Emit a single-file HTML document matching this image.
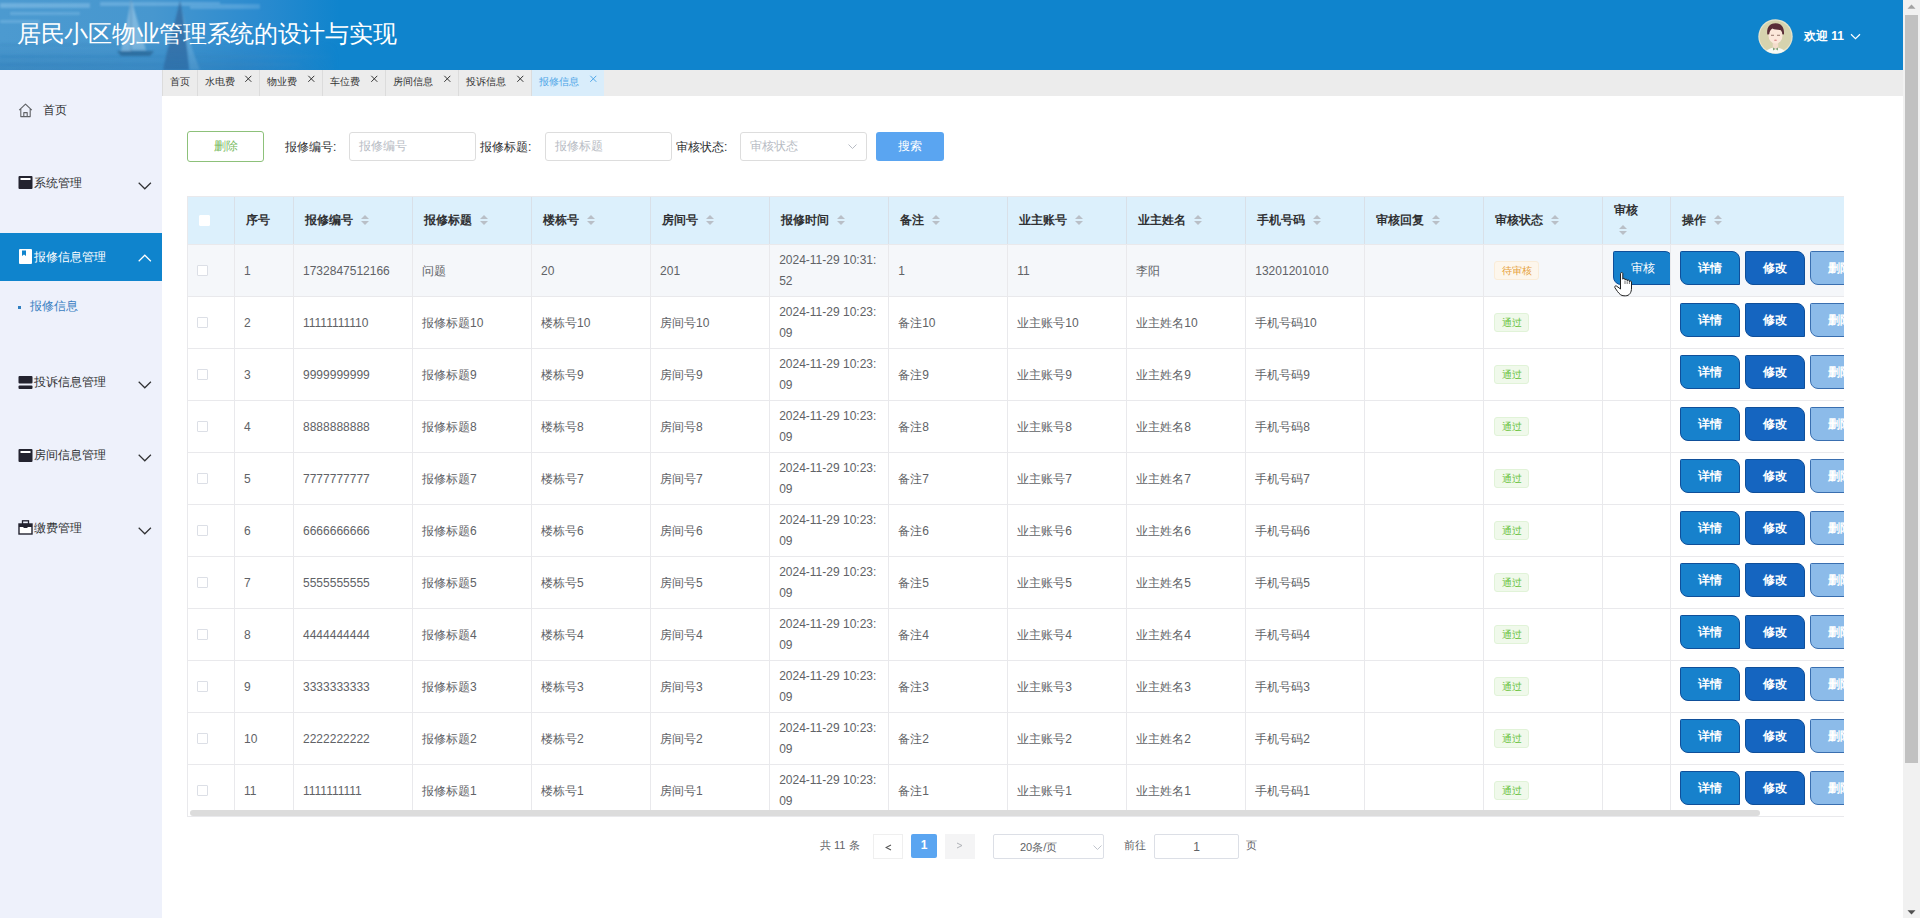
<!DOCTYPE html><html><head><meta charset="utf-8"><title>page</title><style>
*{margin:0;padding:0;box-sizing:border-box}
html,body{width:1920px;height:918px;overflow:hidden;background:#fff;font-family:"Liberation Sans",sans-serif;color:#606266}
.abs{position:absolute}
#hdr{position:absolute;left:0;top:0;width:1903px;height:70px;background:#0f84cd;overflow:hidden}
#hdrimg{position:absolute;left:0;top:0;width:340px;height:70px;background:linear-gradient(90deg,#4c9ad0 0%,#4797cf 45%,#2c8bcf 75%,rgba(15,132,205,0) 100%)}
#title{position:absolute;left:17px;top:17px;font-size:24px;line-height:34px;color:#fff;white-space:nowrap;letter-spacing:-0.3px}
#side{position:absolute;left:0;top:70px;width:162px;height:848px;background:#eef1fb}
#tabs{position:absolute;left:162px;top:70px;width:1741px;height:26px;background:#ececec}
.tab{position:absolute;top:0;height:26px;border-left:1px solid #dcdcdc;font-size:10px;line-height:24px;color:#333;white-space:nowrap}
.tab .x{position:absolute;top:-2px;font-size:10px;color:#333}
.tab.on{background:#d9edfb;color:#4ea6e8}
.tab.on .x{color:#4ea6e8}
.menu{position:absolute;left:0;width:162px;height:48px;font-size:12px;line-height:48px;color:#303133;white-space:nowrap}
.menu .t{position:absolute;left:34px;top:0}
.menu.on{background:#0f84cd;color:#fff}
.chev{position:absolute;left:138px;top:23px}
.menu.on .chev{top:21px}
#content{position:absolute;left:162px;top:96px;width:1741px;height:822px;background:#fff}
.lbl{position:absolute;top:137px;font-size:12px;line-height:20px;color:#303133;white-space:nowrap}
.inp{position:absolute;top:132px;height:29px;border:1px solid #dddddd;border-radius:3px;background:#fff;font-size:12px;line-height:27px;color:#b8bcc4;padding-left:9px;white-space:nowrap}
#tbl{position:absolute;left:187px;top:196px;width:1657px;height:621px;overflow:hidden;border-top:1px solid #e9e9ec;border-left:1px solid #e9e9ec;border-bottom:1px solid #e9e9ec}
table{border-collapse:collapse;table-layout:fixed;width:1719px}
td,th{border-right:1px solid #e9e9ec;border-bottom:1px solid #e9e9ec;padding:0 0 0 10.5px;text-align:left;vertical-align:middle;font-size:12px;color:#606266;white-space:nowrap;overflow:hidden}
th{height:47px;background:#dcf0fc;color:#303133;font-weight:bold;border-right:1px solid #d9e0e8;padding-left:11.5px}
td{height:52px;line-height:21px;padding-top:2px;padding-left:9.5px}
tr.hov td{background:#f5f7fa}
.sort{display:inline-block;width:8px;height:11px;position:relative;vertical-align:-2px;margin-left:7.5px}
.sort:before{content:"";position:absolute;left:0;top:0;border-left:4px solid transparent;border-right:4px solid transparent;border-bottom:4px solid #b9bfc7}
.sort:after{content:"";position:absolute;left:0;top:6px;border-left:4px solid transparent;border-right:4px solid transparent;border-top:4px solid #b9bfc7}
.cb{display:inline-block;width:11px;height:11px;border:1px solid #dcdfe6;background:#fff;border-radius:1px}
.tag{position:relative;top:-1px;left:1px;display:inline-block;height:19px;line-height:17px;padding:0 6.5px;font-size:10px;border:1px solid;border-radius:3px}
.tag.w{background:#fdf6ec;border-color:#faecd8;color:#e6a23c}
.tag.p{background:#f0f9eb;border-color:#e1f3d8;color:#67c23a}
.btn{display:inline-block;height:34px;width:60px;line-height:32px;text-align:center;color:#fff;font-weight:bold;font-size:12px;border:1px solid #0f4f9a;border-radius:1.5px 8px 0 8px;vertical-align:middle;margin-top:-7px}
.b1{background:#1781cc}
.b2{background:#1565c0;margin-left:5px}
.b3{background:#8cbbe9;border-color:#3a6fb0;margin-left:5px}
#hscroll{position:absolute;left:2px;top:613px;width:1570px;height:6px;border-radius:3px;background:#dcdcdc}
#vs{position:absolute;left:1903px;top:0;width:17px;height:918px;background:#f1f1f1}
#vthumb{position:absolute;left:2px;top:15px;width:13px;height:748px;background:#c1c1c1}
.pg{position:absolute;top:834px;height:25px;font-size:12px;line-height:25px;text-align:center}
</style></head><body>
<div id="hdr"><div id="hdrimg"></div>
<svg class="abs" style="left:0;top:0" width="340" height="70" viewBox="0 0 340 70"><defs><linearGradient id="fade" x1="0" x2="1" y1="0" y2="0"><stop offset="0" stop-color="#fff" stop-opacity="1"/><stop offset="0.7" stop-color="#fff" stop-opacity="0.8"/><stop offset="1" stop-color="#fff" stop-opacity="0"/></linearGradient><linearGradient id="vdark" x1="0" x2="0" y1="0" y2="1"><stop offset="0" stop-color="#1d6aa8" stop-opacity="0"/><stop offset="1" stop-color="#1d6aa8" stop-opacity="0.35"/></linearGradient><mask id="m"><rect width="340" height="70" fill="url(#fade)"/></mask><filter id="bl"><feGaussianBlur stdDeviation="1.2"/></filter><filter id="bl2"><feGaussianBlur stdDeviation="1"/></filter></defs><g mask="url(#m)"><g filter="url(#bl)" opacity="0.55"><rect x="0" y="3" width="90" height="5" fill="#8cc3ea"/><rect x="10" y="12" width="70" height="3" fill="#7ab8e4"/><rect x="100" y="2" width="120" height="4" fill="#86bfe8"/><rect x="190" y="4" width="70" height="5" fill="#80bce6"/><rect x="0" y="20" width="40" height="3" fill="#7ab8e4"/><rect x="0" y="44" width="120" height="2" fill="#3f8fc6"/><rect x="0" y="55" width="330" height="3" fill="#3a8cc6"/><rect x="0" y="63" width="300" height="3" fill="#3d8dc6"/></g><g filter="url(#bl2)"><path d="M131 0 L131 51 L121 51 Z" fill="#a9d2ee" opacity="0.55"/><path d="M132 2 L132 50 L146 50 Z" fill="#c0e0f4" opacity="0.5"/><rect x="130.5" y="0" width="1.2" height="52" fill="#6d9cc0"/><path d="M117 51 L154 51 L150 56 L121 56 Z" fill="#2f6a99"/><path d="M180 0 C176 20 168 45 163 70 L189 70 C187 45 184 20 180 0 Z" fill="#33679e" opacity="0.85"/><path d="M182 8 C186 30 192 50 200 70 L190 70 C187 45 184 25 182 8 Z" fill="#8fc3e6" opacity="0.45"/></g><rect x="0" y="40" width="340" height="30" fill="url(#vdark)"/></g></svg>
<div id="title">居民小区物业管理系统的设计与实现</div>
<svg class="abs" style="left:1758px;top:19px" width="35" height="35" viewBox="0 0 35 35"><defs><clipPath id="cc"><circle cx="17.5" cy="17.5" r="17"/></clipPath></defs><circle cx="17.5" cy="17.5" r="17.2" fill="#e6e4cc"/><g clip-path="url(#cc)"><circle cx="17.5" cy="17.5" r="16" fill="#d6d3ae"/><ellipse cx="17.5" cy="36" rx="11" ry="7.5" fill="#f7f9f4"/><rect x="14.8" y="21" width="5.4" height="9" fill="#f3dccb"/><path d="M15 28.5 L17.5 30 L15 31.5 Z M20 28.5 L17.5 30 L20 31.5 Z" fill="#7fa37a"/><ellipse cx="17.5" cy="16.5" rx="7" ry="8" fill="#fbe7da"/><path d="M9.3 15.6 C8.3 8 12 4.2 17.5 4.2 C23 4.2 26.7 8 25.9 15.6 L24.3 15.2 C24.2 12.8 23.4 11.6 22.2 11 C19.5 11 16.5 10.6 14.3 9.6 C12.6 11 11.6 12.5 11.2 15.2 Z" fill="#5a2d37"/><rect x="13" y="15.8" width="3" height="0.9" fill="#8a6a60"/><rect x="19" y="15.8" width="3" height="0.9" fill="#8a6a60"/><ellipse cx="17.5" cy="21.2" rx="1.5" ry="0.8" fill="#d88f8f"/></g></svg>
<div class="abs" style="left:1804px;top:28px;font-size:12px;line-height:16px;font-weight:bold;color:#fff;white-space:nowrap">欢迎 11</div>
<svg class="abs" style="left:1850px;top:33px" width="11" height="7" viewBox="0 0 11 7"><path d="M1 1.2 L5.5 5.6 L10 1.2" stroke="#fff" stroke-width="1.2" fill="none"/></svg>
</div>
<div id="side">
<svg class="abs" style="left:18px;top:33px" width="15" height="15" viewBox="0 0 15 15"><path d="M1.2 7.2 L7.5 1.2 L13.8 7.2 M2.8 5.8 V13.6 H12.2 V5.8 M5.8 13.6 V9.6 H9.2 V13.6" stroke="#606266" stroke-width="1.1" fill="none" stroke-linejoin="round"/></svg>
<div class="abs" style="left:43px;top:32px;font-size:12px;line-height:17px;color:#303133">首页</div>
<div class="menu" style="top:89px">
<svg class="abs" style="left:18px;top:17px" width="15" height="13" viewBox="0 0 15 13"><rect x="0.5" y="0" width="14" height="13" rx="1" fill="#23232f"/><rect x="2.5" y="2" width="10" height="2" fill="#fff"/></svg>
<span class="t" style="color:#303133">系统管理</span>
<svg class="chev" width="14" height="8" viewBox="0 0 14 8"><path d="M0.7 0.8 L6.8 6.8 L12.9 0.8" stroke="#303133" stroke-width="1.2" fill="none"/></svg>
</div>
<div class="menu on" style="top:163px">
<svg class="abs" style="left:19px;top:16px" width="14" height="15" viewBox="0 0 14 15"><rect x="0" y="0" width="13" height="15" rx="1" fill="#fff"/><path d="M3 1.5 V7 L5 5.6 L7 7 V1.5 Z" fill="#0f84cd"/></svg>
<span class="t" style="color:#fff">报修信息管理</span>
<svg class="chev" width="14" height="8" viewBox="0 0 14 8"><path d="M0.7 7.2 L6.8 1.2 L12.9 7.2" stroke="#fff" stroke-width="1.2" fill="none"/></svg>
</div>
<div class="menu" style="top:288px">
<svg class="abs" style="left:18px;top:18px" width="15" height="13" viewBox="0 0 15 13"><rect x="0.5" y="0" width="14" height="7.5" rx="1" fill="#23232f"/><rect x="0.5" y="9.5" width="14" height="3.5" rx="1" fill="#23232f"/></svg>
<span class="t" style="color:#303133">投诉信息管理</span>
<svg class="chev" width="14" height="8" viewBox="0 0 14 8"><path d="M0.7 0.8 L6.8 6.8 L12.9 0.8" stroke="#303133" stroke-width="1.2" fill="none"/></svg>
</div>
<div class="menu" style="top:361px">
<svg class="abs" style="left:18px;top:18px" width="15" height="13" viewBox="0 0 15 13"><rect x="0.5" y="0" width="14" height="13" rx="1" fill="#23232f"/><rect x="2.5" y="2" width="10" height="2" fill="#fff"/></svg>
<span class="t" style="color:#303133">房间信息管理</span>
<svg class="chev" width="14" height="8" viewBox="0 0 14 8"><path d="M0.7 0.8 L6.8 6.8 L12.9 0.8" stroke="#303133" stroke-width="1.2" fill="none"/></svg>
</div>
<div class="menu" style="top:434px">
<svg class="abs" style="left:18px;top:16px" width="15" height="15" viewBox="0 0 15 15"><rect x="4.5" y="0.8" width="6" height="3.5" fill="none" stroke="#23232f" stroke-width="1.3"/><rect x="1" y="4" width="13" height="10" fill="#fff" stroke="#23232f" stroke-width="1.4"/><rect x="1" y="4" width="13" height="3" fill="#23232f"/><rect x="5.5" y="6" width="4" height="2" fill="#23232f"/></svg>
<span class="t" style="color:#303133">缴费管理</span>
<svg class="chev" width="14" height="8" viewBox="0 0 14 8"><path d="M0.7 0.8 L6.8 6.8 L12.9 0.8" stroke="#303133" stroke-width="1.2" fill="none"/></svg>
</div>
<div class="abs" style="left:18px;top:236px;width:3px;height:3px;background:#2f7fc1"></div>
<div class="abs" style="left:30px;top:228px;font-size:12px;line-height:17px;color:#3a80c2">报修信息</div>
</div>
<div id="tabs">
<div class="tab" style="left:0px;width:35px"><span style="position:absolute;left:7px">首页</span></div>
<div class="tab" style="left:35px;width:62px"><span style="position:absolute;left:7px">水电费</span><svg class="x" style="left:46px;top:5px" width="8" height="8" viewBox="0 0 8 8"><path d="M1.3 0.8 L7.3 6.8 M7.3 0.8 L1.3 6.8" stroke="#333" stroke-width="1" fill="none"/></svg></div>
<div class="tab" style="left:97px;width:63px"><span style="position:absolute;left:7px">物业费</span><svg class="x" style="left:47px;top:5px" width="8" height="8" viewBox="0 0 8 8"><path d="M1.3 0.8 L7.3 6.8 M7.3 0.8 L1.3 6.8" stroke="#333" stroke-width="1" fill="none"/></svg></div>
<div class="tab" style="left:160px;width:63px"><span style="position:absolute;left:7px">车位费</span><svg class="x" style="left:47px;top:5px" width="8" height="8" viewBox="0 0 8 8"><path d="M1.3 0.8 L7.3 6.8 M7.3 0.8 L1.3 6.8" stroke="#333" stroke-width="1" fill="none"/></svg></div>
<div class="tab" style="left:223px;width:73px"><span style="position:absolute;left:7px">房间信息</span><svg class="x" style="left:57px;top:5px" width="8" height="8" viewBox="0 0 8 8"><path d="M1.3 0.8 L7.3 6.8 M7.3 0.8 L1.3 6.8" stroke="#333" stroke-width="1" fill="none"/></svg></div>
<div class="tab" style="left:296px;width:73px"><span style="position:absolute;left:7px">投诉信息</span><svg class="x" style="left:57px;top:5px" width="8" height="8" viewBox="0 0 8 8"><path d="M1.3 0.8 L7.3 6.8 M7.3 0.8 L1.3 6.8" stroke="#333" stroke-width="1" fill="none"/></svg></div>
<div class="tab on" style="left:369px;width:73px"><span style="position:absolute;left:7px">报修信息</span><svg class="x" style="left:57px;top:5px" width="8" height="8" viewBox="0 0 8 8"><path d="M1.3 0.8 L7.3 6.8 M7.3 0.8 L1.3 6.8" stroke="#4ea6e8" stroke-width="1" fill="none"/></svg></div>
</div>
<div id="content"></div>
<div class="abs" style="left:187px;top:131px;width:77px;height:31px;border:1px solid #8dc17a;border-radius:3px;color:#79bb63;font-size:12px;line-height:29px;text-align:center">删除</div>
<div class="lbl" style="left:285px">报修编号:</div>
<div class="inp" style="left:349px;width:127px">报修编号</div>
<div class="lbl" style="left:480px">报修标题:</div>
<div class="inp" style="left:545px;width:127px">报修标题</div>
<div class="lbl" style="left:676px">审核状态:</div>
<div class="inp" style="left:740px;width:127px">审核状态<svg class="abs" style="left:107px;top:11px" width="9" height="6" viewBox="0 0 9 6"><path d="M0.5 0.5 L4.5 4.5 L8.5 0.5" stroke="#b8bcc4" stroke-width="1" fill="none"/></svg></div>
<div class="abs" style="left:876px;top:132px;width:68px;height:29px;border-radius:3px;background:#5aa5f1;color:#fff;font-size:12px;line-height:29px;text-align:center">搜索</div>
<div id="tbl"><table><colgroup>
<col style="width:46px">
<col style="width:59px">
<col style="width:119px">
<col style="width:119px">
<col style="width:119px">
<col style="width:119px">
<col style="width:119px">
<col style="width:119px">
<col style="width:119px">
<col style="width:119px">
<col style="width:119px">
<col style="width:119px">
<col style="width:119px">
<col style="width:68px">
<col style="width:236px">
</colgroup><tr>
<th style="padding-left:11px"><i class="cb" style="border-color:#fff;position:relative;top:2px"></i></th>
<th>序号</th>
<th>报修编号<i class="sort"></i></th>
<th>报修标题<i class="sort"></i></th>
<th>楼栋号<i class="sort"></i></th>
<th>房间号<i class="sort"></i></th>
<th>报修时间<i class="sort"></i></th>
<th>备注<i class="sort"></i></th>
<th>业主账号<i class="sort"></i></th>
<th>业主姓名<i class="sort"></i></th>
<th>手机号码<i class="sort"></i></th>
<th>审核回复<i class="sort"></i></th>
<th>审核状态<i class="sort"></i></th>
<th style="line-height:20px">审核<br><i class="sort" style="margin-left:5px"></i></th>
<th>操作<i class="sort"></i></th>
</tr>
<tr class="hov">
<td style="padding-left:9px"><i class="cb" style="position:relative;top:1px"></i></td>
<td>1</td>
<td>1732847512166</td>
<td>问题</td>
<td>20</td>
<td>201</td>
<td>2024-11-29 10:31:<br>52</td>
<td>1</td>
<td>11</td>
<td>李阳</td>
<td>13201201010</td>
<td></td>
<td><span class="tag w">待审核</span></td>
<td style="padding-left:10px"><span class="btn b1" style="font-weight:normal">审核</span></td>
<td style="padding-left:9px"><span class="btn b1">详情</span><span class="btn b2">修改</span><span class="btn b3">删除</span></td>
</tr>
<tr>
<td style="padding-left:9px"><i class="cb" style="position:relative;top:1px"></i></td>
<td>2</td>
<td>11111111110</td>
<td>报修标题10</td>
<td>楼栋号10</td>
<td>房间号10</td>
<td>2024-11-29 10:23:<br>09</td>
<td>备注10</td>
<td>业主账号10</td>
<td>业主姓名10</td>
<td>手机号码10</td>
<td></td>
<td><span class="tag p">通过</span></td>
<td></td>
<td style="padding-left:9px"><span class="btn b1">详情</span><span class="btn b2">修改</span><span class="btn b3">删除</span></td>
</tr>
<tr>
<td style="padding-left:9px"><i class="cb" style="position:relative;top:1px"></i></td>
<td>3</td>
<td>9999999999</td>
<td>报修标题9</td>
<td>楼栋号9</td>
<td>房间号9</td>
<td>2024-11-29 10:23:<br>09</td>
<td>备注9</td>
<td>业主账号9</td>
<td>业主姓名9</td>
<td>手机号码9</td>
<td></td>
<td><span class="tag p">通过</span></td>
<td></td>
<td style="padding-left:9px"><span class="btn b1">详情</span><span class="btn b2">修改</span><span class="btn b3">删除</span></td>
</tr>
<tr>
<td style="padding-left:9px"><i class="cb" style="position:relative;top:1px"></i></td>
<td>4</td>
<td>8888888888</td>
<td>报修标题8</td>
<td>楼栋号8</td>
<td>房间号8</td>
<td>2024-11-29 10:23:<br>09</td>
<td>备注8</td>
<td>业主账号8</td>
<td>业主姓名8</td>
<td>手机号码8</td>
<td></td>
<td><span class="tag p">通过</span></td>
<td></td>
<td style="padding-left:9px"><span class="btn b1">详情</span><span class="btn b2">修改</span><span class="btn b3">删除</span></td>
</tr>
<tr>
<td style="padding-left:9px"><i class="cb" style="position:relative;top:1px"></i></td>
<td>5</td>
<td>7777777777</td>
<td>报修标题7</td>
<td>楼栋号7</td>
<td>房间号7</td>
<td>2024-11-29 10:23:<br>09</td>
<td>备注7</td>
<td>业主账号7</td>
<td>业主姓名7</td>
<td>手机号码7</td>
<td></td>
<td><span class="tag p">通过</span></td>
<td></td>
<td style="padding-left:9px"><span class="btn b1">详情</span><span class="btn b2">修改</span><span class="btn b3">删除</span></td>
</tr>
<tr>
<td style="padding-left:9px"><i class="cb" style="position:relative;top:1px"></i></td>
<td>6</td>
<td>6666666666</td>
<td>报修标题6</td>
<td>楼栋号6</td>
<td>房间号6</td>
<td>2024-11-29 10:23:<br>09</td>
<td>备注6</td>
<td>业主账号6</td>
<td>业主姓名6</td>
<td>手机号码6</td>
<td></td>
<td><span class="tag p">通过</span></td>
<td></td>
<td style="padding-left:9px"><span class="btn b1">详情</span><span class="btn b2">修改</span><span class="btn b3">删除</span></td>
</tr>
<tr>
<td style="padding-left:9px"><i class="cb" style="position:relative;top:1px"></i></td>
<td>7</td>
<td>5555555555</td>
<td>报修标题5</td>
<td>楼栋号5</td>
<td>房间号5</td>
<td>2024-11-29 10:23:<br>09</td>
<td>备注5</td>
<td>业主账号5</td>
<td>业主姓名5</td>
<td>手机号码5</td>
<td></td>
<td><span class="tag p">通过</span></td>
<td></td>
<td style="padding-left:9px"><span class="btn b1">详情</span><span class="btn b2">修改</span><span class="btn b3">删除</span></td>
</tr>
<tr>
<td style="padding-left:9px"><i class="cb" style="position:relative;top:1px"></i></td>
<td>8</td>
<td>4444444444</td>
<td>报修标题4</td>
<td>楼栋号4</td>
<td>房间号4</td>
<td>2024-11-29 10:23:<br>09</td>
<td>备注4</td>
<td>业主账号4</td>
<td>业主姓名4</td>
<td>手机号码4</td>
<td></td>
<td><span class="tag p">通过</span></td>
<td></td>
<td style="padding-left:9px"><span class="btn b1">详情</span><span class="btn b2">修改</span><span class="btn b3">删除</span></td>
</tr>
<tr>
<td style="padding-left:9px"><i class="cb" style="position:relative;top:1px"></i></td>
<td>9</td>
<td>3333333333</td>
<td>报修标题3</td>
<td>楼栋号3</td>
<td>房间号3</td>
<td>2024-11-29 10:23:<br>09</td>
<td>备注3</td>
<td>业主账号3</td>
<td>业主姓名3</td>
<td>手机号码3</td>
<td></td>
<td><span class="tag p">通过</span></td>
<td></td>
<td style="padding-left:9px"><span class="btn b1">详情</span><span class="btn b2">修改</span><span class="btn b3">删除</span></td>
</tr>
<tr>
<td style="padding-left:9px"><i class="cb" style="position:relative;top:1px"></i></td>
<td>10</td>
<td>2222222222</td>
<td>报修标题2</td>
<td>楼栋号2</td>
<td>房间号2</td>
<td>2024-11-29 10:23:<br>09</td>
<td>备注2</td>
<td>业主账号2</td>
<td>业主姓名2</td>
<td>手机号码2</td>
<td></td>
<td><span class="tag p">通过</span></td>
<td></td>
<td style="padding-left:9px"><span class="btn b1">详情</span><span class="btn b2">修改</span><span class="btn b3">删除</span></td>
</tr>
<tr>
<td style="padding-left:9px"><i class="cb" style="position:relative;top:1px"></i></td>
<td>11</td>
<td>1111111111</td>
<td>报修标题1</td>
<td>楼栋号1</td>
<td>房间号1</td>
<td>2024-11-29 10:23:<br>09</td>
<td>备注1</td>
<td>业主账号1</td>
<td>业主姓名1</td>
<td>手机号码1</td>
<td></td>
<td><span class="tag p">通过</span></td>
<td></td>
<td style="padding-left:9px"><span class="btn b1">详情</span><span class="btn b2">修改</span><span class="btn b3">删除</span></td>
</tr>
</table><div id="hscroll"></div></div>
<div class="abs" style="left:820px;top:838px;font-size:11px;line-height:14px;color:#606266;white-space:nowrap">共 11 条</div>
<div class="pg" style="left:873px;width:30px;border:1px solid #efefef;color:#606266"><svg class="abs" style="left:11px;top:9px" width="7" height="7" viewBox="0 0 7 7"><path d="M6 1 L1 3.5 L6 6" stroke="#555" stroke-width="1.1" fill="none"/></svg></div>
<div class="pg" style="left:911px;width:26px;height:24px;line-height:23px;background:#5aa5f1;color:#fff;font-weight:bold;border-radius:2px">1</div>
<div class="pg" style="left:945px;width:30px;background:#f4f4f5;color:#c0c4cc"><svg class="abs" style="left:11px;top:8px" width="7" height="7" viewBox="0 0 7 7"><path d="M1 1 L6 3.5 L1 6" stroke="#b0b3b8" stroke-width="1" fill="none"/></svg></div>
<div class="pg" style="left:993px;width:111px;border:1px solid #dcdfe6;border-radius:2px;color:#606266;font-size:11px;text-align:left;padding-left:26px;line-height:25px">20条/页<svg class="abs" style="left:99px;top:10px" width="9" height="6" viewBox="0 0 9 6"><path d="M0.5 0.5 L4.5 4.5 L8.5 0.5" stroke="#c0c4cc" stroke-width="1" fill="none"/></svg></div>
<div class="abs" style="left:1124px;top:838px;font-size:11px;line-height:14px;color:#606266">前往</div>
<div class="pg" style="left:1154px;width:85px;border:1px solid #dcdfe6;border-radius:2px;color:#606266">1</div>
<div class="abs" style="left:1246px;top:838px;font-size:11px;line-height:14px;color:#606266">页</div>
<svg class="abs" style="left:1614px;top:272px;z-index:5" width="19" height="25" viewBox="0 0 19 25"><path d="M6.5 1.5 C6.5 0.3 8.8 0.3 8.8 1.5 V7.2 C8.8 6.2 11 6.2 11 7.2 V8 C11 7 13.2 7 13.2 8 V8.8 C13.2 7.8 15.4 7.8 15.4 8.8 V9.8 C15.4 8.8 17.5 8.8 17.5 9.8 V16 C17.5 20.5 15.5 23.8 11.5 23.8 H10 C7 23.8 5.5 22 3.5 19.5 L0.9 15.7 C0.2 14.6 1.4 13.3 2.6 14.1 L6.5 17 Z" fill="#fff" stroke="#222" stroke-width="1"/><path d="M11 8.5 V12 M13.2 9.2 V12 M15.4 10 V12" stroke="#555" stroke-width="0.8"/></svg>
<div id="vs"><div id="vthumb"></div><svg class="abs" style="left:4px;top:4px" width="9" height="5" viewBox="0 0 9 5"><path d="M0.5 4.8 L4.5 0.5 L8.5 4.8 Z" fill="#a3a3a3"/></svg><svg class="abs" style="left:4px;top:910px" width="9" height="5" viewBox="0 0 9 5"><path d="M0.5 0.2 L4.5 4.5 L8.5 0.2 Z" fill="#505050"/></svg></div>
</body></html>
